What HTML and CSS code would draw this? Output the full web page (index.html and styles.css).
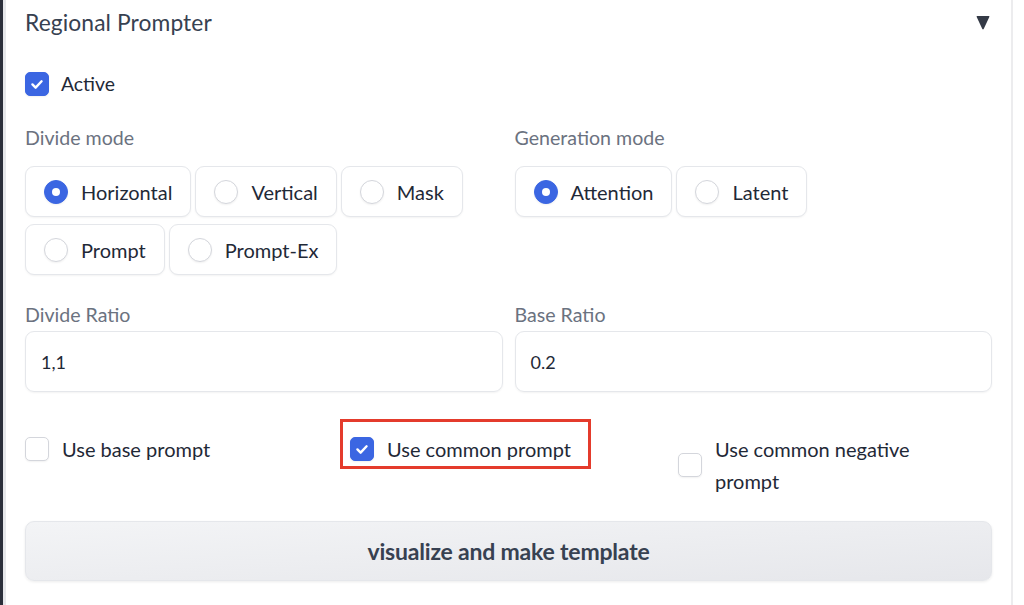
FILE: index.html
```html
<!DOCTYPE html>
<html>
<head>
<meta charset="utf-8">
<link rel="stylesheet" href="styles.css">
</head>
<body>
<div class="page">
  <div class="panel">
    <div class="title-row">
      <span class="title">Regional Prompter</span>
      <svg class="caret" width="14" height="15" viewBox="0 0 14 15"><path d="M1.2 1 L12.8 1 Q13.8 1 13.3 2 L7.8 13.8 Q7 15 6.2 13.8 L0.7 2 Q0.2 1 1.2 1 Z" fill="#343a46"/></svg>
    </div>

    <label class="check-row active-row">
      <span class="cb checked"><svg viewBox="0 0 24 24" width="24" height="24"><path d="M7 12.5 L10.5 16 L17 9" fill="none" stroke="#fff" stroke-width="2.6" stroke-linecap="round" stroke-linejoin="round"/></svg></span>
      <span class="check-text">Active</span>
    </label>

    <div class="two-col">
      <div class="field">
        <div class="field-label">Divide mode</div>
        <div class="radio-group">
          <div class="radio-item"><span class="radio on"></span><span>Horizontal</span></div>
          <div class="radio-item"><span class="radio"></span><span>Vertical</span></div>
          <div class="radio-item"><span class="radio"></span><span>Mask</span></div>
          <div class="radio-item"><span class="radio"></span><span>Prompt</span></div>
          <div class="radio-item"><span class="radio"></span><span>Prompt-Ex</span></div>
        </div>
      </div>
      <div class="field">
        <div class="field-label">Generation mode</div>
        <div class="radio-group">
          <div class="radio-item"><span class="radio on"></span><span>Attention</span></div>
          <div class="radio-item"><span class="radio"></span><span>Latent</span></div>
        </div>
      </div>
    </div>

    <div class="two-col inputs">
      <div class="field">
        <div class="field-label">Divide Ratio</div>
        <div class="text-input">1,1</div>
      </div>
      <div class="field">
        <div class="field-label">Base Ratio</div>
        <div class="text-input">0.2</div>
      </div>
    </div>

    <div class="check-grid">
      <label class="check-row">
        <span class="cb"></span>
        <span class="check-text">Use base prompt</span>
      </label>
      <label class="check-row highlighted">
        <span class="cb checked"><svg viewBox="0 0 24 24" width="24" height="24"><path d="M7 12.5 L10.5 16 L17 9" fill="none" stroke="#fff" stroke-width="2.6" stroke-linecap="round" stroke-linejoin="round"/></svg></span>
        <span class="check-text">Use common prompt</span>
        <span class="red-box"></span>
      </label>
      <label class="check-row third">
        <span class="cb"></span>
        <span class="check-text wrap">Use common negative prompt</span>
      </label>
    </div>

    <button class="big-btn">visualize and make template</button>
  </div>
</div>
</body>
</html>
```

FILE: styles.css
```css
* { box-sizing: border-box; }
html, body { margin: 0; padding: 0; background: #fff; }
body {
  font-family: Lato, "Open Sans", sans-serif;
  color: #1f2937;
  width: 1024px;
  height: 605px;
  overflow: hidden;
}
.page {
  border-left: 3px solid #2b2f3a;
  padding-right: 11px;
  height: 605px;
}
.panel {
  border-left: 3px solid #e6e7ea;
  border-right: 2px solid #ececee;
  height: 605px;
  padding: 0 19px 0 19px;
}
.title-row {
  height: 44px;
  display: flex;
  align-items: center;
  justify-content: space-between;
  padding-right: 2px;
}
.title {
  font-size: 22.8px;
  color: #374151;
  letter-spacing: 0.1px;
}

.check-row {
  display: flex;
  align-items: center;
  font-size: 20px;
  line-height: 32px;
  color: #1f2937;
  position: relative;
}
.active-row { margin-top: 28px; height: 24px; }
.active-row .check-text { font-size: 19.4px; margin-left: 12px; }
.cb {
  width: 24px;
  height: 24px;
  flex: 0 0 24px;
  border-radius: 5px;
  border: 1px solid #d4d6dc;
  background: #fff;
  box-shadow: 0 1px 2px rgba(0,0,0,0.06);
  display: flex;
  align-items: center;
  justify-content: center;
}
.cb.checked {
  background: #3b66e2;
  border-color: #3b66e2;
}
.cb svg { display: block; }
.check-text { margin-left: 13px; }

.two-col {
  display: grid;
  grid-template-columns: 1fr 1fr;
  column-gap: 12px;
  margin-top: 30px;
}
.field-label {
  font-size: 19.6px;
  line-height: 24px;
  color: #6b7280;
}
.radio-group {
  margin-top: 16px;
  display: flex;
  flex-wrap: wrap;
  column-gap: 4px;
  row-gap: 7px;
}
.radio-item {
  height: 51px;
  display: flex;
  align-items: center;
  gap: 13px;
  padding: 0 18px 0 18px;
  border: 1px solid #e5e7eb;
  border-radius: 9px;
  background: #fff;
  box-shadow: 0 1px 2px rgba(0,0,0,0.05);
  font-size: 20px;
  color: #1f2937;
}
.radio {
  width: 24px;
  height: 24px;
  border-radius: 50%;
  border: 1px solid #d4d6dc;
  background: #fff;
  box-shadow: 0 1px 2px rgba(0,0,0,0.06);
  display: flex;
  align-items: center;
  justify-content: center;
}
.radio.on {
  background: #3b66e2;
  border-color: #3b66e2;
}
.radio.on::after {
  content: "";
  width: 8px;
  height: 8px;
  border-radius: 50%;
  background: #fff;
}

.inputs { margin-top: 28px; }
.inputs .field-label { margin-bottom: 4px; }
.text-input {
  height: 61px;
  border: 1px solid #e5e7eb;
  border-radius: 9px;
  box-shadow: 0 1px 2px rgba(0,0,0,0.05);
  padding: 0 15px;
  display: flex;
  align-items: center;
  font-size: 18px;
  color: #1f2937;
}

.check-grid {
  display: grid;
  grid-template-columns: 325px 328px 1fr;
  margin-top: 41px;
  align-items: start;
}
.check-grid .check-row { align-items: center; }
.wrap { max-width: 230px; }
.red-box {
  position: absolute;
  left: -10px;
  top: -14px;
  width: 251px;
  height: 50px;
  border: 3px solid #e43b2c;
}

.big-btn {
  display: flex;
  align-items: center;
  justify-content: center;
  width: 100%;
  height: 60px;
  margin-top: 24px;
  border: 1px solid #e5e7eb;
  border-radius: 9px;
  background: linear-gradient(to bottom right, #f3f4f6, #e6e7eb);
  box-shadow: 0 1px 3px rgba(0,0,0,0.08);
  font-family: Lato, "Open Sans", sans-serif;
  font-weight: 700;
  font-size: 23px;
  letter-spacing: -0.2px;
  color: #374151;
}
```
